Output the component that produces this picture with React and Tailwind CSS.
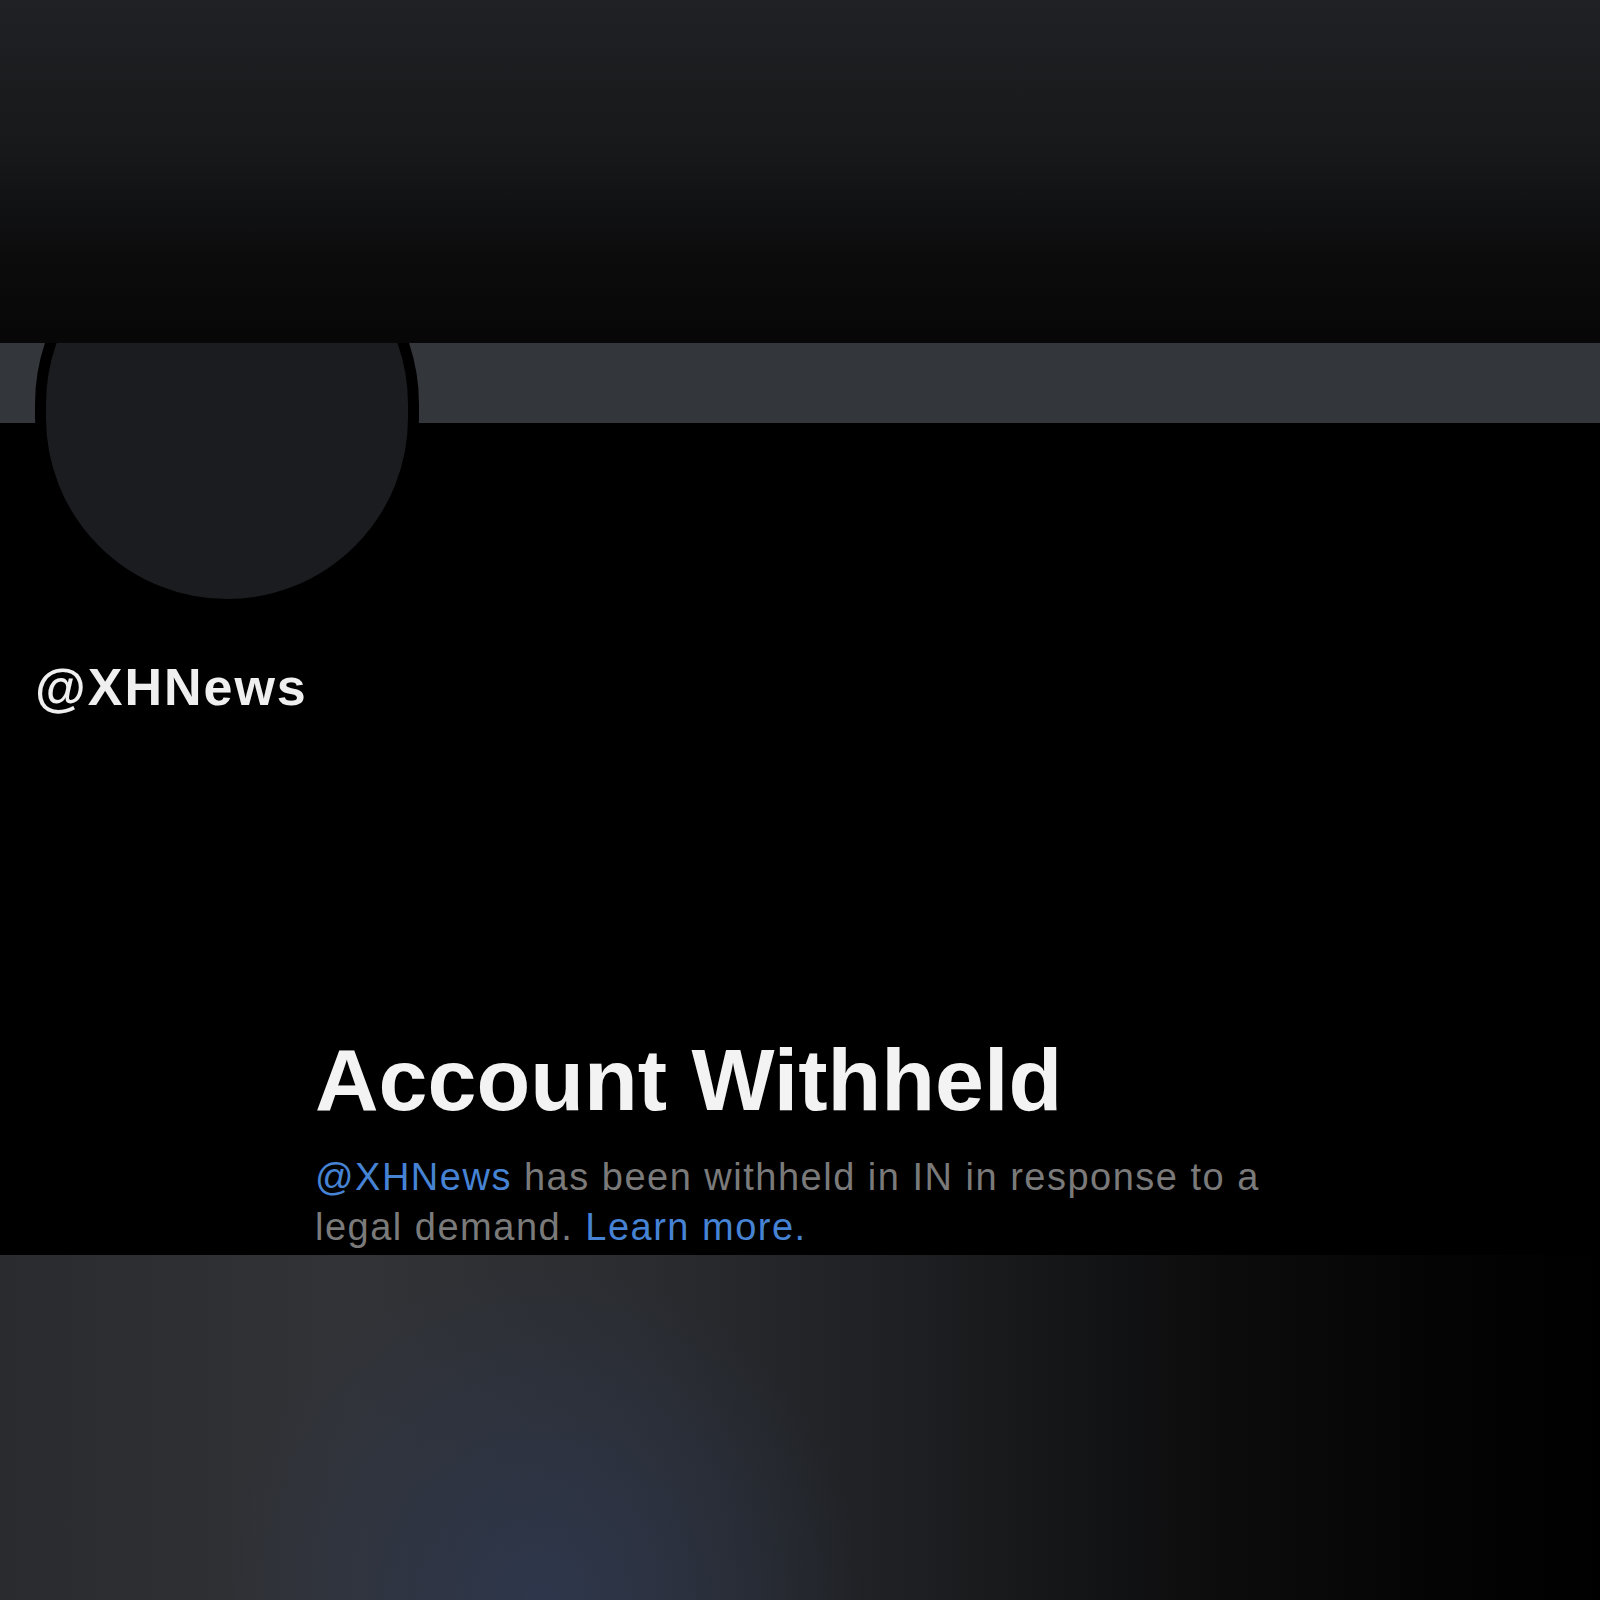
import React from "react";

// Withheld account profile, dark theme
export default function App() {
  return (
    <div className="w-[1600px] h-[1600px] flex flex-col bg-black font-['Liberation_Sans',Arial,sans-serif] overflow-hidden">
      {/* top blurred strip */}
      <div className="h-[343px] shrink-0 bg-[linear-gradient(to_bottom,#202124_0%,#17181a_45%,#0c0c0d_75%,#070707_100%)]" />

      <div className="relative h-[912px] shrink-0 overflow-hidden flex flex-col">
        <div className="h-[80px] shrink-0 bg-[#33363a]" />

        <div className="flex-1 bg-black flex flex-col">
          <div className="mt-[238px] pl-[35px] text-[52px] leading-[52px] font-bold tracking-[2px] text-[#efefef]">
            @XHNews
          </div>

          <div className="mt-[323px] pl-[315px] flex flex-col">
            <h1 className="text-[88px] leading-[88px] font-bold text-[#f3f3f3]">
              Account Withheld
            </h1>
            <div className="mt-[28px] w-[1000px] text-[38px] leading-[50px] tracking-[1.5px] text-[#7a7a7a]">
              <div>
                <span className="text-[#4683d4]">@XHNews</span> has been withheld in IN in response to a
              </div>
              <div>
                legal demand. <span className="text-[#4683d4]">Learn more.</span>
              </div>
            </div>
          </div>
        </div>

        {/* avatar overlaps the banner */}
        <div className="absolute left-[35px] top-[-131px] w-[384px] h-[398px] rounded-full border-[11px] border-black bg-[#1a1c1f]" />
      </div>

      {/* bottom blurred strip */}
      <div className="flex-1 bg-[radial-gradient(ellipse_320px_330px_at_34%_100%,rgba(46,56,80,0.85),rgba(46,56,80,0)),linear-gradient(to_right,#2a2b2e_0%,#313337_22%,#2a2c30_40%,#1e2023_56%,#0e0e0f_74%,#050505_88%,#000_100%)]" />
    </div>
  );
}
